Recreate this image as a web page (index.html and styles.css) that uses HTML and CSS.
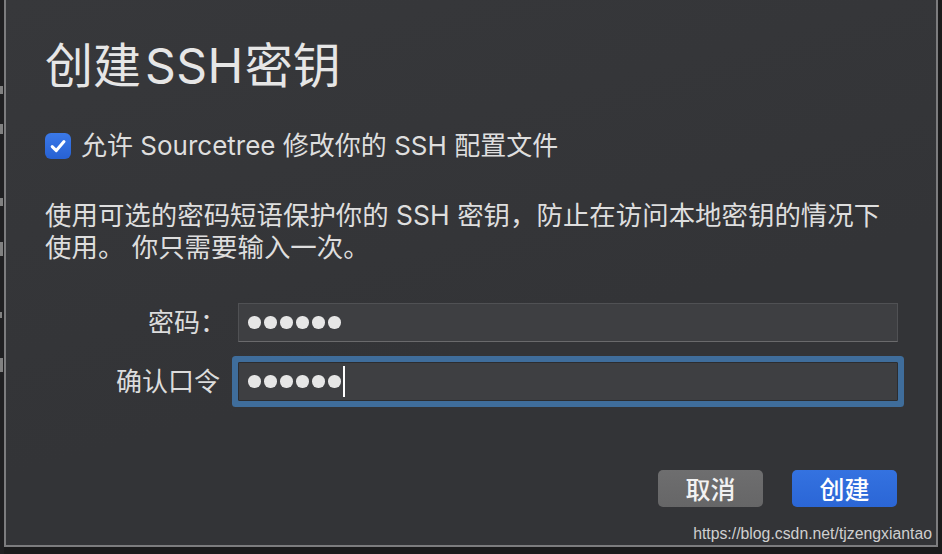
FILE: index.html
```html
<!DOCTYPE html>
<html lang="zh-CN">
<head>
<meta charset="utf-8">
<title>创建SSH密钥</title>
<link rel="stylesheet" href="styles.css">
</head>
<body>
<div class="screen">
  <div class="edge">
    <span class="mark m1"></span>
    <span class="mark m2"></span>
    <span class="mark m3"></span>
    <span class="mark m4"></span>
    <span class="mark m5"></span>
    <span class="mark m6"></span>
  </div>
  <div class="dialog">
    <h1 class="title">创建<span class="latin">SSH</span>密钥</h1>
    <label class="check-row">
      <span class="checkbox">
        <svg width="26" height="26" viewBox="0 0 26 26"><path d="M7.2 13.6 L11.3 17.6 L19 8.6" fill="none" stroke="#fff" stroke-width="3" stroke-linecap="round" stroke-linejoin="round"/></svg>
      </span>
      <span class="check-text">允许 Sourcetree 修改你的 SSH 配置文件</span>
    </label>
    <p class="desc">使用可选的密码短语保护你的 SSH 密钥，防止在访问本地密钥的情况下<br>使用。 你只需要输入一次。</p>
    <div class="form">
      <span class="label">密码：</span>
      <div class="field">
        <span class="dot"></span><span class="dot"></span><span class="dot"></span><span class="dot"></span><span class="dot"></span><span class="dot"></span>
      </div>
      <span class="label">确认口令</span>
      <div class="field focus">
        <span class="dot"></span><span class="dot"></span><span class="dot"></span><span class="dot"></span><span class="dot"></span><span class="dot"></span><span class="caret"></span>
      </div>
    </div>
    <div class="actions">
      <button class="btn cancel">取消</button>
      <button class="btn primary">创建</button>
    </div>
    <div class="watermark">https://blog.csdn.net/tjzengxiantao</div>
  </div>
</div>
</body>
</html>
```

FILE: styles.css
```css
* { box-sizing: border-box; }
html, body { margin: 0; padding: 0; }
body {
  width: 942px;
  height: 554px;
  overflow: hidden;
  background: #1b1b1c;
  font-family: "Inter", "Noto Sans CJK SC", sans-serif;
  color: #dedede;
}
.screen {
  display: flex;
  height: 554px;
}
.edge {
  width: 4px;
  flex: none;
  background: #202022;
  display: flex;
  flex-direction: column;
  align-items: flex-start;
}
.mark {
  display: block;
  width: 3px;
  background: #9a9a9a;
  opacity: 0.8;
}
.m1 { height: 8px; margin-top: 86px; }
.m2 { height: 10px; margin-top: 30px; }
.m3 { height: 8px; margin-top: 64px; }
.m4 { height: 14px; margin-top: 36px; }
.m5 { height: 6px; margin-top: 56px; width: 2px; }
.m6 { height: 14px; margin-top: 40px; }

.dialog {
  position: relative;
  width: 934px;
  height: 547px;
  flex: none;
  border-left: 2px solid #7c7c7e;
  border-right: 2px solid #7c7c7e;
  border-bottom: 2px solid #7c7c7e;
  background: linear-gradient(165deg, #37383b 0%, #333437 60%, #333437 100%);
  padding: 42px 39px 0 39px;
  display: flex;
  flex-direction: column;
}
.title {
  margin: 0;
  font-size: 48px;
  line-height: 48px;
  font-weight: 400;
  color: #e6e6e6;
  letter-spacing: 0;
}
.title .latin {
  padding: 0 1px 0 4px;
  letter-spacing: 0.5px;
}
.check-row {
  margin-top: 43px;
  display: flex;
  align-items: center;
  height: 26px;
  gap: 10px;
}
.checkbox {
  width: 26px;
  height: 26px;
  border-radius: 6px;
  background: linear-gradient(180deg, #3b79e8 0%, #2761d3 100%);
  display: flex;
  align-items: center;
  justify-content: center;
}
.check-text {
  font-size: 26px;
  line-height: 26px;
  color: #dedede;
}
.desc {
  margin: 40px 0 0 0;
  font-size: 26.45px;
  line-height: 32px;
  color: #dedede;
  white-space: nowrap;
}
.form {
  margin-top: 40px;
  display: grid;
  grid-template-columns: 175px 660px;
  column-gap: 18px;
  row-gap: 20px;
  align-items: center;
}
.label {
  text-align: right;
  font-size: 26px;
  line-height: 39px;
  color: #dcdcdc;
}
.label:first-child { margin-right: -6px; }
.field {
  height: 39px;
  background: #3e3f42;
  border: 1px solid #505154;
  border-bottom-color: #6a6a6c;
  display: flex;
  align-items: center;
  padding-left: 9px;
}
.field.focus {
  border-radius: 1px;
  border-color: #2c2d30;
  box-shadow: 0 0 0 6px #3f6d9b;
}
.dot {
  width: 12.5px;
  height: 12.5px;
  border-radius: 50%;
  background: #e6e6e6;
  margin-right: 3.6px;
  flex: none;
}
.caret {
  width: 2px;
  height: 31px;
  background: #ffffff;
  margin-left: -2px;
}
.actions {
  margin-top: 69px;
  display: flex;
  justify-content: flex-end;
  gap: 29px;
}
.btn {
  width: 105px;
  height: 37px;
  border: none;
  border-radius: 5px;
  font-family: "Noto Sans CJK SC", sans-serif;
  font-size: 25px;
  font-weight: 500;
  line-height: 37px;
  padding: 0;
  color: #f2f2f2;
}
.cancel {
  background: linear-gradient(180deg, #6e6e6f 0%, #666667 100%);
}
.primary {
  background: linear-gradient(180deg, #3472e0 0%, #2b66d6 100%);
  color: #ffffff;
}
.watermark {
  position: absolute;
  right: 4px;
  top: 524px;
  font-family: "Liberation Sans", Arial, sans-serif;
  font-size: 15.8px;
  line-height: 20px;
  color: #cfcfcf;
}
```
